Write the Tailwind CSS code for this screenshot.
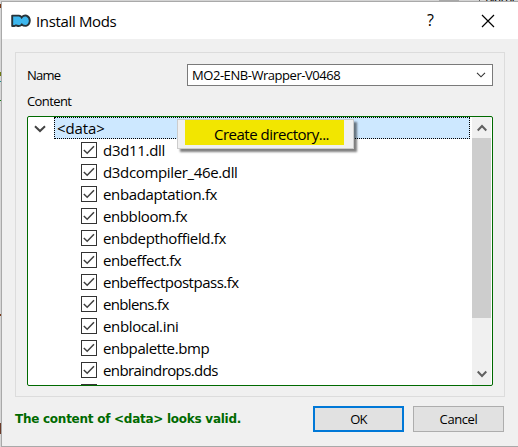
<!DOCTYPE html>
<html lang="en">
<head>
<meta charset="utf-8">
<title>Install Mods</title>
<script src="https://cdn.jsdelivr.net/npm/@tailwindcss/browser@4"></script>
</head>
<body class="w-[518px] h-[447px] overflow-hidden bg-[#d6d6d6] font-['Open_Sans','Noto_Sans',sans-serif] text-black">
<div class="relative w-[518px] h-[447px] overflow-hidden pt-[1px] pl-[1px]">
  <!-- fragments of the window behind the dialog -->
  <div class="absolute left-0 top-0 w-[518px] h-px bg-[#d4d4d4]"></div>
  <div class="absolute left-[439px] top-0 w-[20px] h-px bg-[#a8a8a8]"></div>
  <div class="absolute left-[479px] top-0 w-px h-px bg-[#606060]"></div>
  <div class="absolute left-[485px] top-[-9px] text-[13px] leading-[14px] tracking-[-0.8px]">Name</div>
  <div class="absolute left-0 top-[4px] w-px h-[4px] bg-[#7a3a18]"></div>
  <div class="absolute left-0 top-[72px] w-px h-[4px] bg-[#6d7a10]"></div>
  <div class="absolute left-0 top-[81px] w-px h-px bg-[#199090]"></div>
  <div class="absolute left-0 top-[100px] w-px h-px bg-[#108010]"></div>
  <div class="absolute left-0 top-[314px] w-px h-[2px] bg-[#7a3a18]"></div>
  <div class="absolute left-0 top-[423px] w-px h-[11px] bg-[#6b3a28]"></div>

  <main class="relative w-[518px] h-[446px] bg-[#f0f0f0] border-t border-l border-b border-[#a9a9a9] flex flex-col">
    <header class="h-[37px] shrink-0 bg-white flex items-center">
      <svg class="ml-[9px] mt-[1px]" width="20" height="14" viewBox="0 0 20 14"><path d="M1.200 1.600H8Q9.500 1.800 10.600 3.200Q13 1 15.500 1.700Q18.800 3.200 18.800 6.800Q18.500 11 15 11.900Q12.500 12.100 10.800 10.600Q9 12.400 7 12L5 11.300L3.500 12H1.200Z" fill="#3db7ee" stroke="#263238" stroke-width="1.900" stroke-linejoin="round"/><path d="M10.600 3v1.800M10.800 11V9.400" stroke="#263238" stroke-width="1"/></svg>
      <h1 class="ml-[5px] text-[15px] leading-[20px] tracking-[-0.35px] whitespace-nowrap">Install Mods</h1>
      <span class="ml-auto mt-[-1px] w-[10px] text-[16px] leading-[20px]">?</span>
      <svg class="ml-[44px] mr-[24px]" width="14" height="14" viewBox="0 0 14 14"><path d="M1 1L13 13M13 1L1 13" stroke="#000" stroke-width="1.200"/></svg>
    </header>

    <section class="mt-[13px] ml-[13px] w-[490px] h-[345px] shrink-0 border border-[#dcdcdc] pl-[11px] pt-[11px]">
      <div class="flex items-center h-[22px]">
        <label class="w-[160px] text-[13px] leading-[18px] tracking-[-0.8px]">Name</label>
        <div class="w-[306px] h-[22px] bg-white border border-[#7a7a7a] flex items-center pl-[4px]">
          <span class="text-[13px] leading-[18px] tracking-[-0.45px] whitespace-nowrap">MO2-ENB-Wrapper-V0468</span>
          <svg class="ml-auto mr-[6px]" width="10" height="6" viewBox="0 0 10 6"><path d="M1 .8L5 4.800L9 .8" fill="none" stroke="#333" stroke-width="1.100"/></svg>
        </div>
      </div>
      <div class="mt-[6px] h-[18px] text-[13px] leading-[18px] tracking-[-0.6px]">Content</div>
      <div class="mt-[6px] w-[466px] h-[270px] bg-white border border-[#006a00] rounded-[2px] flex overflow-hidden">
        <div class="w-[443px] flex flex-col text-[15px] leading-[22px]">
          <div class="flex h-[22px] shrink-0">
            <svg class="ml-[6px] mt-[8px]" width="12" height="8" viewBox="0 0 12 8"><path d="M1 1.200L6 6L11 1.200" fill="none" stroke="#444" stroke-width="2"/></svg>
            <div class="ml-[8px] w-[416px] h-[22px] bg-[#cde8ff] border border-dotted border-black pl-[2px] leading-[21px] tracking-[-0.1px]">&lt;data&gt;</div>
          </div>
          <div id="files"></div>
        </div>
        <div class="ml-px w-[19px] bg-[#f0f0f0] flex flex-col items-center">
          <svg class="mt-[7px] shrink-0" width="10" height="8" viewBox="0 0 10 8"><path d="M.7 6.500L5 2L9.300 6.500" fill="none" stroke="#606060" stroke-width="2"/></svg>
          <div class="mt-[6px] w-[19px] h-[180px] bg-[#cdcdcd] shrink-0"></div>
          <svg class="mt-[52px] shrink-0" width="10" height="8" viewBox="0 0 10 8"><path d="M.7 1.500L5 6L9.300 1.500" fill="none" stroke="#606060" stroke-width="2"/></svg>
        </div>
      </div>
    </section>

    <footer class="mt-[9px] ml-[13px] flex items-center">
      <p class="w-[298px] [font-family:'DejaVu_Sans',sans-serif] text-[12px] leading-[18px] font-bold text-[#006a00] tracking-[-0.26px] whitespace-nowrap">The content of &lt;data&gt; looks valid.</p>
      <button class="w-[91px] h-[26px] bg-[#e1e1e1] border-2 border-[#0078d7] text-[13px] leading-[18px] tracking-[-0.8px]">OK</button>
      <button class="ml-[9px] w-[91px] h-[26px] bg-[#e1e1e1] border border-[#adadad] text-[13px] leading-[18px] tracking-[-0.4px]">Cancel</button>
    </footer>
  </main>

  <div class="absolute left-[177px] top-[119px] w-[177px] h-[30px] bg-[#f0f0f0] border border-[#cccccc] shadow-[3px_3px_2px_rgba(0,0,0,0.5)] pl-[7px]">
    <div class="w-[159px] h-[25px] bg-[#f2e600] pl-[29px] text-[15px] leading-[29px] tracking-[-0.5px] whitespace-nowrap">Create directory...</div>
  </div>
</div>
<script>
  const files = [
    ['d3d11.dll', 'tracking-[-0.3px]'],
    ['d3dcompiler_46e.dll', 'tracking-[-0.35px]'],
    ['enbadaptation.fx', 'tracking-[-0.35px]'],
    ['enbbloom.fx', 'tracking-[-0.4px]'],
    ['enbdepthoffield.fx', 'tracking-[-0.35px]'],
    ['enbeffect.fx', 'tracking-[-0.4px]'],
    ['enbeffectpostpass.fx', 'tracking-[-0.5px]'],
    ['enblens.fx', 'tracking-[-0.65px]'],
    ['enblocal.ini', 'tracking-[-0.35px]'],
    ['enbpalette.bmp', 'tracking-[-0.4px]'],
    ['enbraindrops.dds', 'tracking-[-0.6px]'],
    ['', '']
  ];
  document.getElementById('files').innerHTML = files.map(([name, tracking]) => `
    <div class="flex h-[22px] pl-[53px]">
      <svg class="mt-[3px] shrink-0" width="16" height="16" viewBox="0 0 16 16"><rect x=".5" y=".5" width="15" height="15" fill="#fff" stroke="#333"/><path d="M2.800 8L6.200 11.300L13 4.300" fill="none" stroke="#404040" stroke-width="1.500"/></svg>
      <span class="ml-[6px] whitespace-nowrap ${tracking}">${name}</span>
    </div>`).join('');
</script>
</body>
</html>
